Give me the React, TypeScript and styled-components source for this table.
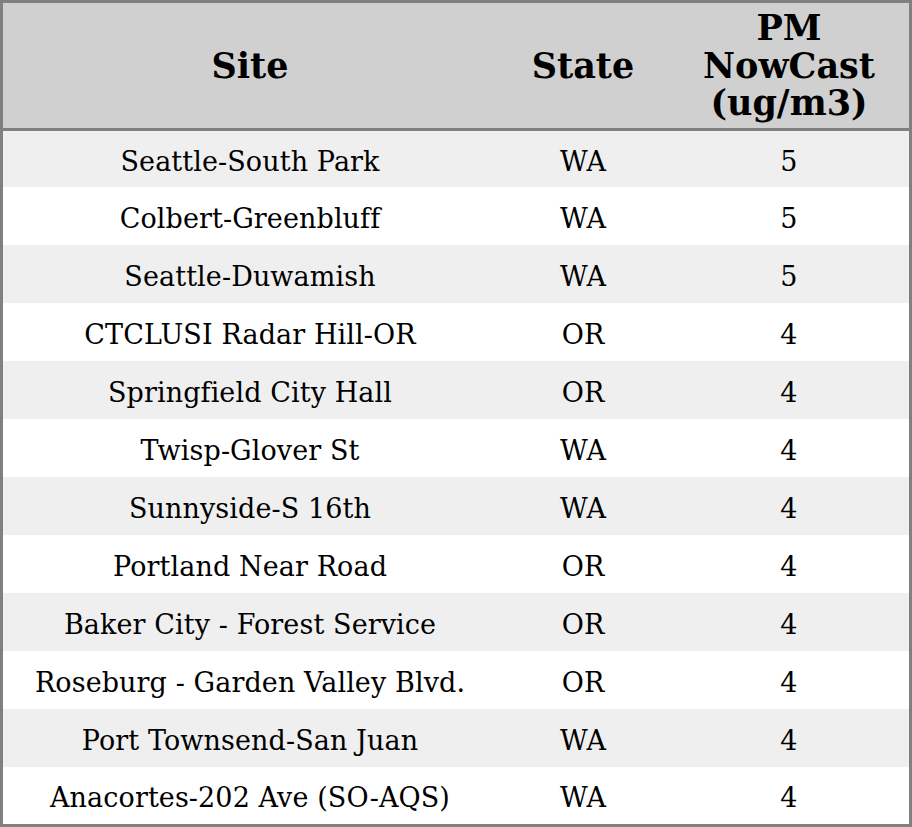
import React from "react";
import styled, { createGlobalStyle } from "styled-components";

const GlobalStyle = createGlobalStyle`
  html, body {
    margin: 0;
    padding: 0;
    background: #ffffff;
  }
  body {
    font-family: "DejaVu Serif", "Liberation Serif", serif;
    color: #000000;
  }
`;

const Frame = styled.div`
  width: 912px;
  height: 827px;
  box-sizing: border-box;
  border: 3px solid #808080;
  display: grid;
  grid-template-rows: 128px auto;
  overflow: hidden;
`;

const HeaderRow = styled.div`
  display: grid;
  grid-template-columns: 494px 172px 1fr;
  background: #d0d0d0;
  border-bottom: 3px solid #808080;
`;

const HeaderCell = styled.div`
  display: flex;
  align-items: center;
  justify-content: center;
  text-align: center;
  font-size: 35px;
  font-weight: bold;
  line-height: 37.5px;
`;

const Body = styled.div`
  display: flex;
  flex-direction: column;
`;

const Row = styled.div<{ $shaded: boolean; $h: number }>`
  display: grid;
  grid-template-columns: 494px 172px 1fr;
  height: ${(p) => p.$h}px;
  background: ${(p) => (p.$shaded ? "#efefef" : "#ffffff")};
`;

const Cell = styled.div`
  display: flex;
  align-items: center;
  justify-content: center;
  padding-top: 4px;
  font-size: 27px;
  letter-spacing: 0.1px;
  white-space: nowrap;
  font-variant-ligatures: none;
`;

const rows: [string, string, number][] = [
  ["Seattle-South Park", "WA", 5],
  ["Colbert-Greenbluff", "WA", 5],
  ["Seattle-Duwamish", "WA", 5],
  ["CTCLUSI Radar Hill-OR", "OR", 4],
  ["Springfield City Hall", "OR", 4],
  ["Twisp-Glover St", "WA", 4],
  ["Sunnyside-S 16th", "WA", 4],
  ["Portland Near Road", "OR", 4],
  ["Baker City - Forest Service", "OR", 4],
  ["Roseburg - Garden Valley Blvd.", "OR", 4],
  ["Port Townsend-San Juan", "WA", 4],
  ["Anacortes-202 Ave (SO-AQS)", "WA", 4],
];

function rowHeight(i: number) {
  if (i === 0) return 56;
  if (i === rows.length - 1) return 57;
  return 58;
}

export default function App() {
  return (
    <>
      <GlobalStyle />
      <Frame>
        <HeaderRow>
          <HeaderCell>Site</HeaderCell>
          <HeaderCell>State</HeaderCell>
          <HeaderCell>
            PM
            <br />
            NowCast
            <br />
            (ug/m3)
          </HeaderCell>
        </HeaderRow>
        <Body>
          {rows.map(([site, state, pm], i) => (
            <Row key={site} $shaded={i % 2 === 0} $h={rowHeight(i)}>
              <Cell>{site}</Cell>
              <Cell>{state}</Cell>
              <Cell>{pm}</Cell>
            </Row>
          ))}
        </Body>
      </Frame>
    </>
  );
}
